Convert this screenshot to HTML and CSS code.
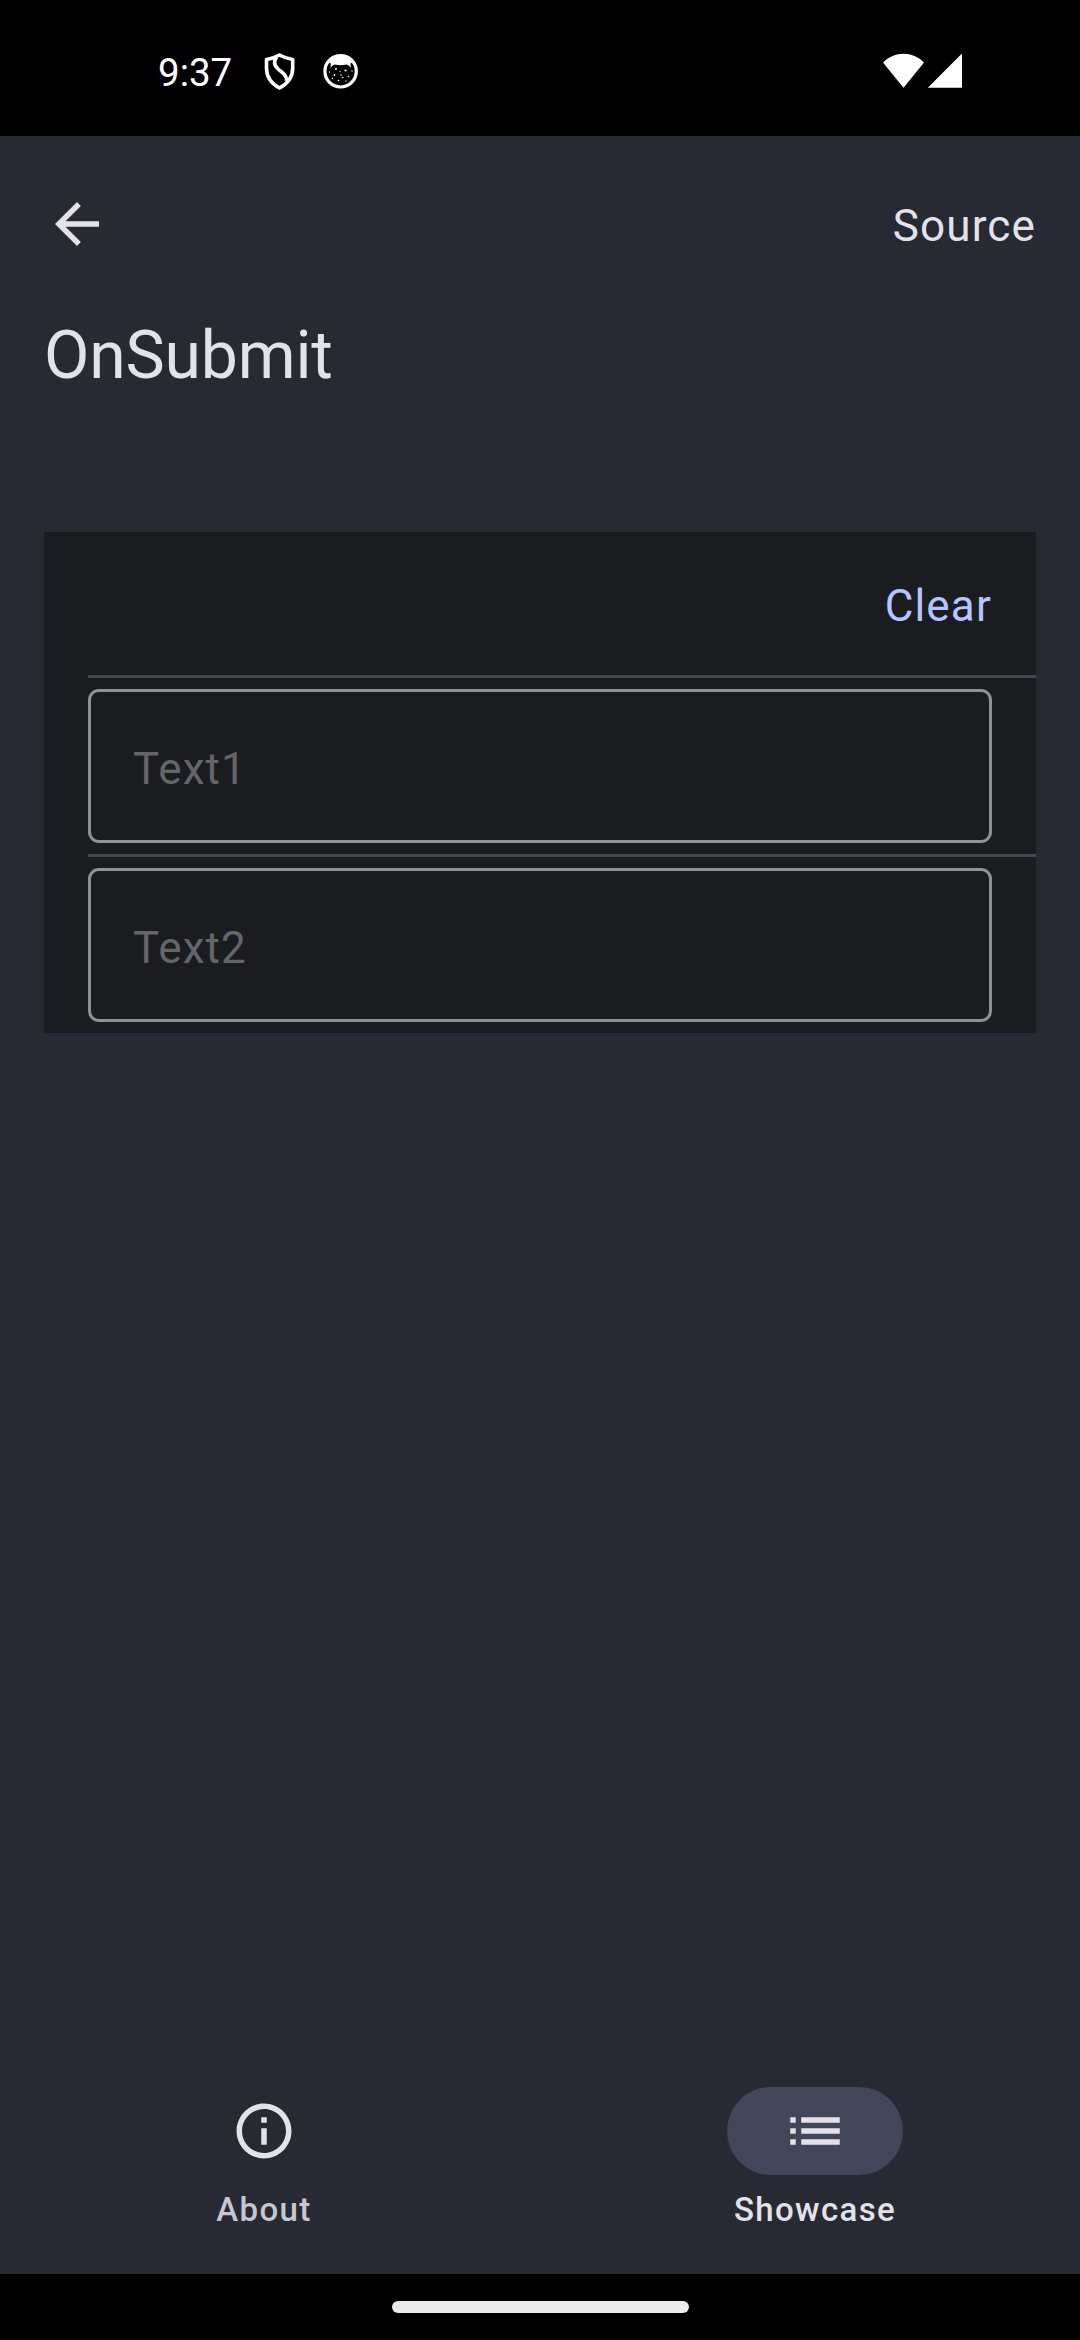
FILE: index.html
```html
<!DOCTYPE html>
<html lang="en">
<head>
<meta charset="utf-8">
<title>OnSubmit</title>
<link rel="stylesheet" href="styles.css">
</head>
<body>
<div class="screen">
  <header class="status-bar">
    <span class="clock">9:37</span>
    <svg class="shield" viewBox="0 0 32 38" fill="none" stroke="#fff" stroke-width="3.600" stroke-linejoin="round">
      <path d="M15.500 2C12 4 7.500 5.800 2.500 6.500V15C2.500 24 8 31 15.500 35C23 31 28.700 24 28.700 15V6.500C24 5.800 19 4 15.500 2Z"/>
      <path d="M12.500 4C9.500 8.500 10 12.500 14 16C18.500 20 23 22 22.500 28"/>
    </svg>
    <svg class="mascot" viewBox="0 0 36 36">
      <circle cx="17.600" cy="18.300" r="15.700" fill="none" stroke="#fff" stroke-width="3.200"/>
      <path d="M5.500 9Q10 2 17.600 2T30 9L27.500 10.500L27.800 15Q26.500 12.200 23.500 11.500Q17.600 13 11.800 11.500Q8.800 12.200 7.500 15L7.800 10.500Z" fill="#fff"/>
      <g fill="#fff">
        <circle cx="13" cy="16" r="1"/><circle cx="22.500" cy="17.500" r="1.100"/><circle cx="18" cy="22" r=".7"/>
        <circle cx="11.500" cy="22" r=".9"/><circle cx="19.500" cy="24.500" r=".8"/><circle cx="25.500" cy="23.500" r=".8"/>
        <circle cx="15.500" cy="27.500" r=".8"/><circle cx="23" cy="28" r=".7"/><circle cx="6.500" cy="19" r=".7"/>
        <circle cx="29" cy="18" r=".7"/><circle cx="9.500" cy="25.500" r=".7"/><circle cx="17" cy="18.500" r=".6"/>
      </g>
    </svg>
    <svg class="signals" viewBox="0 0 80 36" fill="#fff">
      <path d="M20.500 34.700L0 9.500Q8.500 .7 20.500 .7T41 9.500Z"/>
      <path d="M44.800 34.800L79 .5V34.800Z"/>
    </svg>
  </header>

  <main class="page">
    <div class="toolbar">
      <svg class="icon" viewBox="0 0 24 24"><path d="M20 11H7.830l5.590-5.590L12 4l-8 8 8 8 1.410-1.410L7.830 13H20v-2z"/></svg>
      <span class="source">Source</span>
    </div>
    <h1 class="title">OnSubmit</h1>

    <section class="card">
      <div class="actions"><span class="clear">Clear</span></div>
      <div class="row"><div class="field">Text1</div></div>
      <div class="row"><div class="field">Text2</div></div>
    </section>
  </main>

  <nav class="tabs">
    <div class="tab">
      <span class="pill"><svg class="icon" viewBox="0 0 24 24"><path d="M11 7h2v2h-2zm0 4h2v6h-2zm1-9C6.480 2 2 6.480 2 12s4.480 10 10 10 10-4.480 10-10S17.520 2 12 2zm0 18c-4.410 0-8-3.590-8-8s3.590-8 8-8 8 3.590 8 8-3.590 8-8 8z"/></svg></span>
      <span class="label">About</span>
    </div>
    <div class="tab active">
      <span class="pill"><svg class="icon" viewBox="0 0 24 24"><path d="M3 13h2v-2H3v2zm0 4h2v-2H3v2zm0-8h2V7H3v2zm4 4h14v-2H7v2zm0 4h14v-2H7v2zM7 7v2h14V7H7z"/></svg></span>
      <span class="label">Showcase</span>
    </div>
  </nav>
  <footer class="system-nav"><span class="handle"></span></footer>
</div>
</body>
</html>
```
FILE: styles.css
```css
* { box-sizing: border-box; }
body { margin: 0; background: #000; font-family: Roboto, sans-serif; color: #e3e1e9; }
svg { display: block; flex: none; }
.screen { width: 1080px; height: 2340px; display: flex; flex-direction: column; background: #282a33; overflow: hidden; }

.status-bar { height: 136px; flex: none; display: flex; align-items: flex-start; padding: 0 117px 0 158px; background: #000; color: #fff; }
.clock { width: 106px; margin-top: 50px; font-size: 38.5px; line-height: 46px; }
.shield { width: 32px; height: 38px; margin-top: 53px; }
.mascot { width: 36px; height: 36px; margin: 53px 0 0 27px; }
.signals { width: 80px; height: 36px; margin: 53px 0 0 auto; }

.page { flex: 1; padding: 44px 44px 0; }
.toolbar { height: 88px; display: flex; justify-content: space-between; align-items: center; }
.icon { width: 66px; height: 66px; fill: #e3e1e9; }
.source, .clear { font-size: 44px; line-height: 52px; letter-spacing: 1.15px; }
.source { padding-top: 4px; }
.title { margin: 44px 0 0; font-size: 66px; line-height: 88px; font-weight: 400; letter-spacing: -0.15px; }

.card { margin-top: 132px; background: #1b1c20; }
.actions { height: 143px; padding: 5px 44px 0; display: flex; justify-content: flex-end; align-items: center; }
.clear { color: #b4c5ff; }
.row { margin-left: 44px; padding: 11px 44px 11px 0; border-top: 3px solid #45464f; }
.field { height: 154px; padding: 6px 0 0 42px; display: flex; align-items: center; border: 3px solid #8f909a; border-radius: 11px; font-size: 44px; letter-spacing: 1.1px; color: #646569; }

.tabs { height: 220px; flex: none; display: grid; grid-template-columns: 528px 530px; gap: 22px; padding-top: 33px; }
.tab { display: flex; flex-direction: column; align-items: center; }
.pill { width: 176px; height: 88px; display: flex; align-items: center; justify-content: center; border-radius: 44px; }
.label { margin-top: 13px; font-size: 33px; line-height: 44px; font-weight: 500; letter-spacing: 1.375px; color: #c6c6d0; }
.active .pill { background: #424659; }
.active .label { color: #e3e1e9; }

.system-nav { height: 66px; flex: none; display: flex; justify-content: center; align-items: flex-start; background: #000; }
.handle { width: 297px; height: 12px; margin-top: 27px; border-radius: 6px; background: #ebebeb; }
```
